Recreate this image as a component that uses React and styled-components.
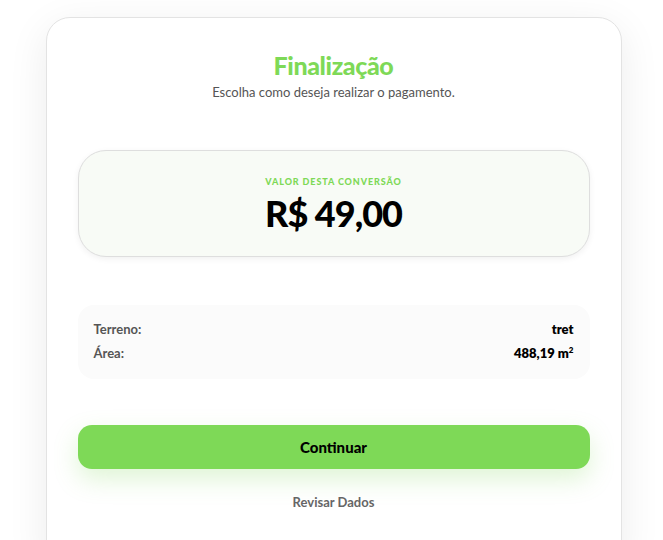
import styled, { createGlobalStyle } from "styled-components";

const GlobalStyle = createGlobalStyle`
  body {
    margin: 0;
    background: #ffffff;
    font-family: 'Lato', 'Inter', sans-serif;
  }
`;

const Page = styled.div`
  display: flex;
  justify-content: center;
  align-items: flex-start;
  padding: 17px 0 0 4px;
  height: 540px;
  overflow: hidden;
  box-sizing: border-box;
`;

const Card = styled.div`
  width: 576px;
  flex-shrink: 0;
  box-sizing: border-box;
  background: #fff;
  border: 1px solid #e3e3e3;
  border-radius: 24px;
  box-shadow: 0 10px 40px rgba(0, 0, 0, 0.08);
  padding: 32px 31px 60px;
  display: flex;
  flex-direction: column;
`;

const Title = styled.h1`
  margin: 0;
  text-align: center;
  font-size: 25px;
  line-height: 30px;
  font-weight: 900;
  color: #7ed957;
  letter-spacing: -0.4px;
`;

const Subtitle = styled.p`
  margin: 4px 0 0;
  text-align: center;
  font-size: 13px;
  line-height: 16px;
  color: #555;
`;

const ValueBox = styled.div`
  margin-top: 50px;
  height: 107px;
  flex-shrink: 0;
  box-sizing: border-box;
  background: #f8fbf6;
  border: 1px solid #dedede;
  border-radius: 28px;
  box-shadow: 0 2px 6px rgba(0, 0, 0, 0.06);
  display: flex;
  flex-direction: column;
  align-items: center;
  padding-top: 25px;
`;

const ValueLabel = styled.div`
  font-size: 9px;
  font-weight: 900;
  letter-spacing: 0.9px;
  color: #7ed957;
  line-height: 12px;
`;

const Amount = styled.div`
  margin-top: 3px;
  font-size: 36px;
  line-height: 44px;
  font-weight: 900;
  color: #000;
  letter-spacing: -1px;
`;

const InfoBox = styled.div`
  margin-top: 48px;
  flex-shrink: 0;
  background: #fbfbfb;
  border-radius: 16px;
  padding: 16px 16px 18px;
  display: flex;
  flex-direction: column;
  gap: 8px;
`;

const InfoRow = styled.div`
  display: flex;
  justify-content: space-between;
  font-size: 13px;
  line-height: 16px;
`;

const InfoKey = styled.span`
  color: #555;
  font-weight: 700;
`;

const InfoValue = styled.span`
  color: #000;
  font-weight: 800;

  sup {
    font-size: 8px;
    line-height: 0;
  }
`;

const PrimaryButton = styled.button`
  margin-top: 46px;
  height: 44px;
  flex-shrink: 0;
  border: none;
  border-radius: 14px;
  background: #7ed957;
  color: #000;
  font-family: inherit;
  font-size: 15px;
  font-weight: 900;
  box-shadow: 0 10px 24px rgba(126, 217, 87, 0.25);
  cursor: pointer;
`;

const LinkButton = styled.button`
  margin-top: 24px;
  align-self: center;
  background: none;
  border: none;
  color: #666;
  font-family: inherit;
  font-size: 13px;
  font-weight: 700;
  cursor: pointer;
`;

export default function App() {
  return (
    <>
      <GlobalStyle />
      <Page>
        <Card>
          <Title>Finalização</Title>
          <Subtitle>Escolha como deseja realizar o pagamento.</Subtitle>

          <ValueBox>
            <ValueLabel>VALOR DESTA CONVERSÃO</ValueLabel>
            <Amount>R$ 49,00</Amount>
          </ValueBox>

          <InfoBox>
            <InfoRow>
              <InfoKey>Terreno:</InfoKey>
              <InfoValue>tret</InfoValue>
            </InfoRow>
            <InfoRow>
              <InfoKey>Área:</InfoKey>
              <InfoValue>
                488,19 m<sup>2</sup>
              </InfoValue>
            </InfoRow>
          </InfoBox>

          <PrimaryButton>Continuar</PrimaryButton>
          <LinkButton>Revisar Dados</LinkButton>
        </Card>
      </Page>
    </>
  );
}
